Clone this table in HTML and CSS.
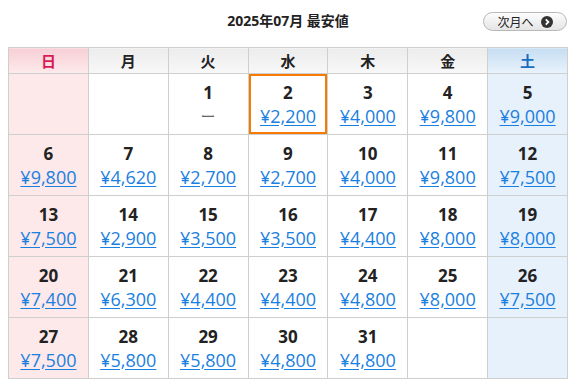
FILE: index.html
```html
<!DOCTYPE html>
<html lang="ja">
<head>
<meta charset="utf-8">
<link rel="stylesheet" href="styles.css">
</head>
<body>
<div class="cal">
  <div class="top">
    <div class="title">2025年07月 最安値</div>
    <a class="next" href="#">次月へ
      <svg width="12" height="12" viewBox="0 0 12 12"><circle cx="6" cy="6" r="6" fill="#333"/><path d="M4.8 3.4 L7.4 6 L4.8 8.6" fill="none" stroke="#fff" stroke-width="1.8"/></svg>
    </a>
  </div>
  <table class="grid">
    <thead>
      <tr><th class="sun">日</th><th>月</th><th>火</th><th>水</th><th>木</th><th>金</th><th class="sat">土</th></tr>
    </thead>
    <tbody>
      <tr>
        <td class="sun"></td>
        <td></td>
        <td><div class="d">1</div><div class="none">ー</div></td>
        <td class="sel"><div class="d">2</div><a class="p" href="#">¥2,200</a></td>
        <td><div class="d">3</div><a class="p" href="#">¥4,000</a></td>
        <td><div class="d">4</div><a class="p" href="#">¥9,800</a></td>
        <td class="sat"><div class="d">5</div><a class="p" href="#">¥9,000</a></td>
      </tr>
      <tr>
        <td class="sun"><div class="d">6</div><a class="p" href="#">¥9,800</a></td>
        <td><div class="d">7</div><a class="p" href="#">¥4,620</a></td>
        <td><div class="d">8</div><a class="p" href="#">¥2,700</a></td>
        <td><div class="d">9</div><a class="p" href="#">¥2,700</a></td>
        <td><div class="d">10</div><a class="p" href="#">¥4,000</a></td>
        <td><div class="d">11</div><a class="p" href="#">¥9,800</a></td>
        <td class="sat"><div class="d">12</div><a class="p" href="#">¥7,500</a></td>
      </tr>
      <tr>
        <td class="sun"><div class="d">13</div><a class="p" href="#">¥7,500</a></td>
        <td><div class="d">14</div><a class="p" href="#">¥2,900</a></td>
        <td><div class="d">15</div><a class="p" href="#">¥3,500</a></td>
        <td><div class="d">16</div><a class="p" href="#">¥3,500</a></td>
        <td><div class="d">17</div><a class="p" href="#">¥4,400</a></td>
        <td><div class="d">18</div><a class="p" href="#">¥8,000</a></td>
        <td class="sat"><div class="d">19</div><a class="p" href="#">¥8,000</a></td>
      </tr>
      <tr>
        <td class="sun"><div class="d">20</div><a class="p" href="#">¥7,400</a></td>
        <td><div class="d">21</div><a class="p" href="#">¥6,300</a></td>
        <td><div class="d">22</div><a class="p" href="#">¥4,400</a></td>
        <td><div class="d">23</div><a class="p" href="#">¥4,400</a></td>
        <td><div class="d">24</div><a class="p" href="#">¥4,800</a></td>
        <td><div class="d">25</div><a class="p" href="#">¥8,000</a></td>
        <td class="sat"><div class="d">26</div><a class="p" href="#">¥7,500</a></td>
      </tr>
      <tr>
        <td class="sun"><div class="d">27</div><a class="p" href="#">¥7,500</a></td>
        <td><div class="d">28</div><a class="p" href="#">¥5,800</a></td>
        <td><div class="d">29</div><a class="p" href="#">¥5,800</a></td>
        <td><div class="d">30</div><a class="p" href="#">¥4,800</a></td>
        <td><div class="d">31</div><a class="p" href="#">¥4,800</a></td>
        <td></td>
        <td class="sat"></td>
      </tr>
    </tbody>
  </table>
</div>
</body>
</html>
```

FILE: styles.css
```css
html, body {
  margin: 0;
  padding: 0;
  background: #fff;
}
body {
  padding: 0 0 0 8px;
  font-family: "Open Sans", "Noto Sans CJK JP", sans-serif;
  color: #222;
}
.cal {
  width: 560px;
}
.top {
  position: relative;
  height: 47px;
  display: flex;
  align-items: center;
  justify-content: center;
}
.title {
  font-weight: 700;
  font-size: 14px;
  margin-top: -8px;
  color: #222;
}
.next {
  position: absolute;
  right: 1px;
  top: 12px;
  width: 84px;
  height: 19px;
  box-sizing: border-box;
  border: 1px solid #b8b8b8;
  border-radius: 10px;
  background: linear-gradient(#fdfdfd, #e4e4e4);
  display: flex;
  align-items: center;
  justify-content: center;
  gap: 7px;
  font-size: 12px;
  color: #222;
  text-decoration: none;
  font-family: "Noto Sans CJK JP", sans-serif;
}
.next svg { display: block; }
.grid {
  border-collapse: collapse;
  width: 560px;
  table-layout: fixed;
}
.grid th, .grid td {
  border: 1px solid #cfcfcf;
  text-align: center;
  padding: 0;
}
.grid th {
  height: 25px;
  font-size: 15px;
  font-weight: 700;
  font-family: "Noto Sans CJK JP", sans-serif;
  background: linear-gradient(#ececec, #f8f8f8);
  color: #222;
}
.grid th.sun {
  background: linear-gradient(#f6cfd5, #fdeaec);
  color: #d81b52;
}
.grid th.sat {
  background: linear-gradient(#c6ddf2, #e9f3fc);
  color: #1a6cc0;
}
.grid td {
  height: 60px;
  vertical-align: middle;
}
.grid td.sun { background: #fde8ea; }
.grid td.sat { background: #e7f1fc; }
.grid td.sel { box-shadow: inset 0 0 0 2px #f57c00; }
.d {
  font-weight: 700;
  font-size: 17px;
  line-height: 24px;
  color: #222;
}
.p {
  display: inline-block;
  font-size: 18px;
  line-height: 22px;
  color: #1a80e0;
  text-decoration: underline;
  text-underline-offset: 2px;
}
.none {
  font-size: 15px;
  line-height: 22px;
  color: #666;
}
```
